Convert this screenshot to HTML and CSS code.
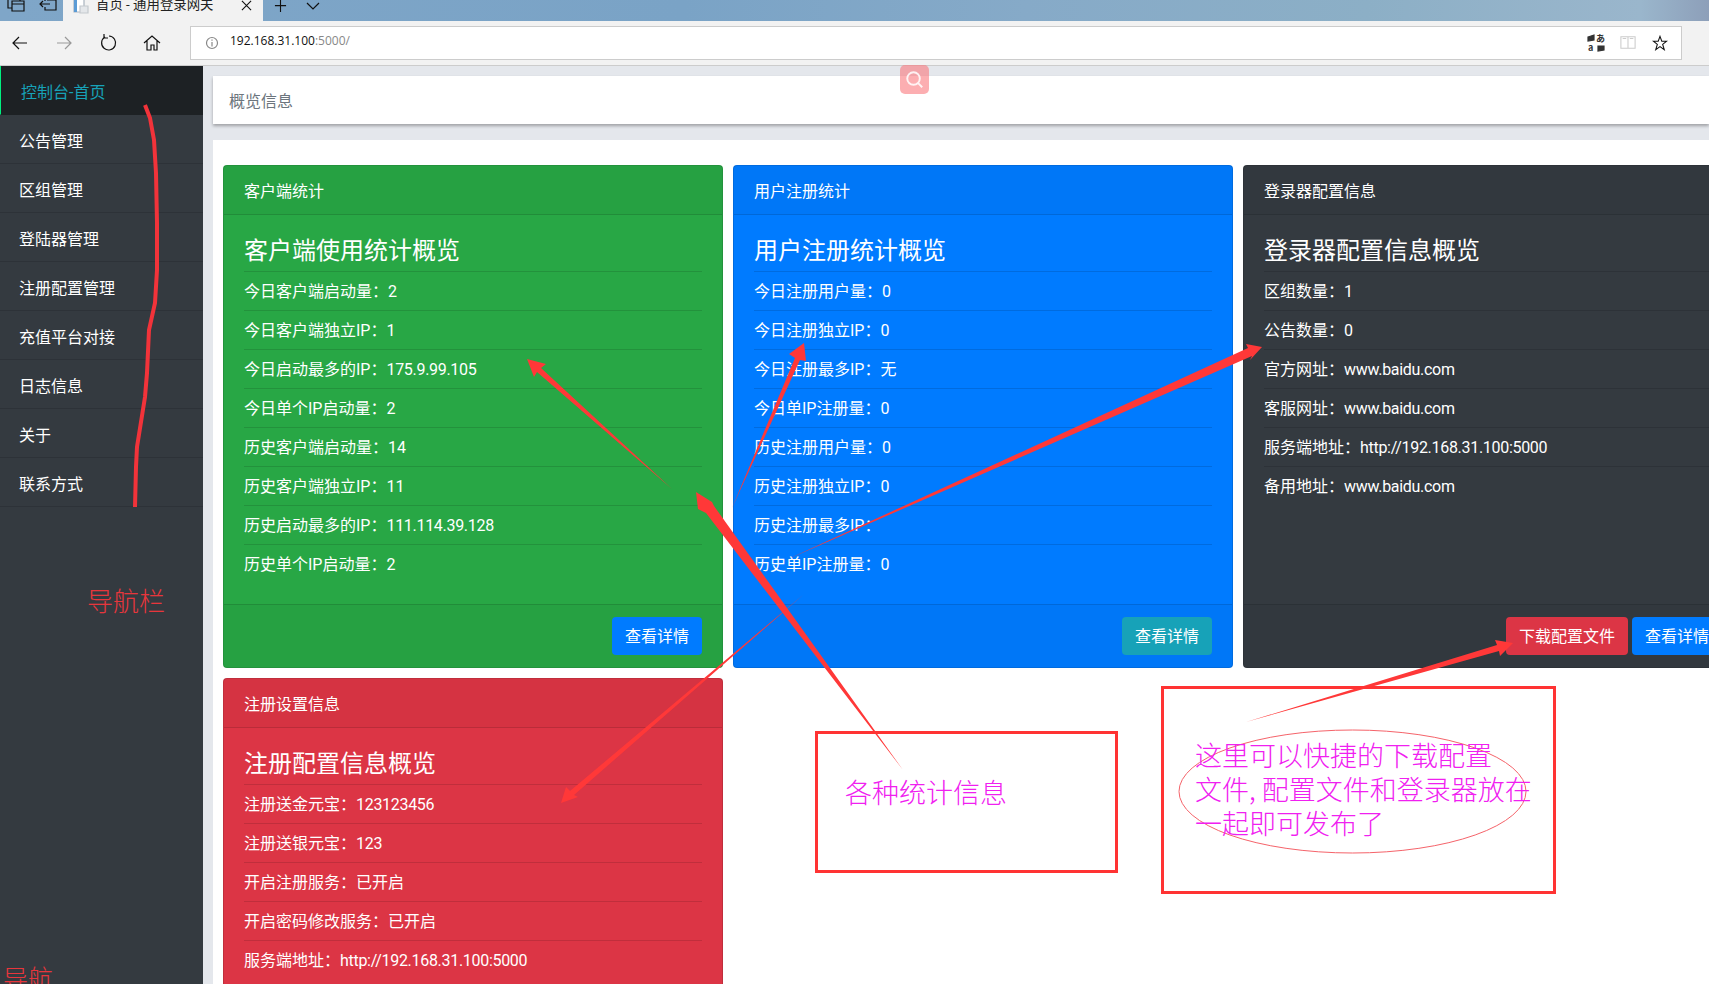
FILE: index.html
```html
<!DOCTYPE html>
<html lang="zh-CN">
<head>
    <meta charset="UTF-8">
    <title>首页 - 通用登录网关</title>
    <link rel="stylesheet" href="styles.css">
</head>
<body>
    <div class="tabstrip">
        <div class="strip-icons">
            <svg class="strip-icon" viewBox="0 0 20 16"><path d="M2 -4H14V1M2 -4V8H6M6 1H18V11H6ZM6 4H18"/></svg>
            <svg class="strip-icon" viewBox="0 0 20 16"><path d="M6 -3H17V10H6V7M6 1V-3M1 4H11M4 1L1 4L4 7M8 0H17"/></svg>
        </div>
        <div class="tab">
            <svg class="tab-doc" viewBox="0 0 16 16"><path class="doc-page" d="M1 -4H11V12H1Z"/><path class="doc-side" d="M1 -4H4V12H1Z"/><path class="doc-corner" d="M7 6H15V13H7Z"/></svg>
            <span class="tab-title">首页 - 通用登录网关</span>
            <svg class="tab-close" viewBox="0 0 12 12"><path d="M1 1L11 11M11 1L1 11"/></svg>
        </div>
        <svg class="tab-add" viewBox="0 0 14 14"><path d="M7 0V13M1 6H13"/></svg>
        <svg class="tab-more" viewBox="0 0 14 8"><path d="M1 1L7 7L13 1"/></svg>
    </div>

    <div class="toolbar">
        <span class="tool"><svg viewBox="0 0 18 18"><path d="M16 9H2M8 3L2 9L8 15"/></svg></span>
        <span class="tool tool-off"><svg viewBox="0 0 18 18"><path d="M2 9H16M10 3L16 9L10 15"/></svg></span>
        <span class="tool"><svg viewBox="0 0 18 18"><path d="M6 3A7 7 0 1 0 10 2M5 0V4H9"/></svg></span>
        <span class="tool"><svg viewBox="0 0 18 18"><path d="M1 9L9 2L17 9M4 7V16H8V11H11V16H14V7"/></svg></span>
        <div class="address">
            <svg class="addr-info" viewBox="0 0 14 14"><circle cx="7" cy="7" r="5.5"/><path d="M7 6V10.5M7 3.5V4.8"/></svg>
            <span class="addr-url">192.168.31.100<span class="addr-port">:5000/</span></span>
            <svg class="addr-translate" viewBox="0 0 18 18">
                <path d="M1 3L7 1V6L1 7Z"/>
                <path d="M11 12H17V16L11 17Z"/>
                <text x="9" y="8" class="addr-glyph">あ</text>
                <text x="1" y="17" class="addr-glyph">a</text>
            </svg>
            <svg class="addr-book" viewBox="0 0 18 18"><path d="M1 2H17V15H1ZM9 2V15M3 4H7M11 4H15"/></svg>
            <svg class="addr-star" viewBox="0 0 18 18"><path d="M9 1.5L11 7H16.5L12 10.5L13.8 16.5L9 13L4.2 16.5L6 10.5L1.5 7H7Z"/></svg>
        </div>
    </div>

    <div class="app">
        <ul class="sidebar">
            <li class="nav-item active">控制台-首页</li>
            <li class="nav-item">公告管理</li>
            <li class="nav-item">区组管理</li>
            <li class="nav-item">登陆器管理</li>
            <li class="nav-item">注册配置管理</li>
            <li class="nav-item">充值平台对接</li>
            <li class="nav-item">日志信息</li>
            <li class="nav-item">关于</li>
            <li class="nav-item">联系方式</li>
        </ul>

        <div class="main">
            <div class="page-head">概览信息</div>
            <div class="content">
                <div class="card card-green">
                    <div class="card-head">客户端统计</div>
                    <div class="card-body">
                        <h4>客户端使用统计概览</h4>
                        <ul class="stat-list">
                            <li>今日客户端启动量：2</li>
                            <li>今日客户端独立IP：1</li>
                            <li>今日启动最多的IP：<span class="val">175.9.99.105</span></li>
                            <li>今日单个IP启动量：2</li>
                            <li>历史客户端启动量：14</li>
                            <li>历史客户端独立IP：11</li>
                            <li>历史启动最多的IP：<span class="val">111.114.39.128</span></li>
                            <li>历史单个IP启动量：2</li>
                        </ul>
                    </div>
                    <div class="card-foot"><a class="btn btn-blue">查看详情</a></div>
                </div>

                <div class="card card-blue">
                    <div class="card-head">用户注册统计</div>
                    <div class="card-body">
                        <h4>用户注册统计概览</h4>
                        <ul class="stat-list">
                            <li>今日注册用户量：0</li>
                            <li>今日注册独立IP：0</li>
                            <li>今日注册最多IP：无</li>
                            <li>今日单IP注册量：0</li>
                            <li>历史注册用户量：0</li>
                            <li>历史注册独立IP：0</li>
                            <li>历史注册最多IP：</li>
                            <li>历史单IP注册量：0</li>
                        </ul>
                    </div>
                    <div class="card-foot"><a class="btn btn-teal">查看详情</a></div>
                </div>

                <div class="card card-dark">
                    <div class="card-head">登录器配置信息</div>
                    <div class="card-body">
                        <h4>登录器配置信息概览</h4>
                        <ul class="stat-list">
                            <li>区组数量：1</li>
                            <li>公告数量：0</li>
                            <li>官方网址：<span class="val">www.baidu.com</span></li>
                            <li>客服网址：<span class="val">www.baidu.com</span></li>
                            <li>服务端地址：<span class="val">http://192.168.31.100:5000</span></li>
                            <li>备用地址：<span class="val">www.baidu.com</span></li>
                        </ul>
                    </div>
                    <div class="card-foot"><a class="btn btn-red">下载配置文件</a><a class="btn btn-blue">查看详情</a></div>
                </div>

                <div class="card card-red">
                    <div class="card-head">注册设置信息</div>
                    <div class="card-body">
                        <h4>注册配置信息概览</h4>
                        <ul class="stat-list">
                            <li>注册送金元宝：<span class="val">123123456</span></li>
                            <li>注册送银元宝：<span class="val">123</span></li>
                            <li>开启注册服务：已开启</li>
                            <li>开启密码修改服务：已开启</li>
                            <li>服务端地址：<span class="val">http://192.168.31.100:5000</span></li>
                        </ul>
                    </div>
                </div>
            </div>
        </div>
    </div>

    <a class="search-btn">
        <svg viewBox="0 0 30 30"><circle cx="14" cy="14" r="6.5"/><path d="M19 19L23 23"/></svg>
    </a>

    <!-- annotations drawn on top of the screenshot -->
    <svg class="marks" viewBox="0 0 1709 984">
        <polyline class="mark-line" points="145,105 150,118 154,140 156,173 157,223 157,270 155,303 149,330 147,373 145,397 137,447 136,467 135,507"/>
        <polygon class="mark-arrow" points="672,489 541,368 546,364 527,359 534,377 537,372"/>
        <polygon class="mark-arrow" points="903,770 714,506 712,502 696,492 698,509 706,513"/>
        <polygon class="mark-arrow" points="732,508 795,358 789,354 804,343 806,361 800,360"/>
        <polygon class="mark-arrow" points="786,560 1248,348 1246,344 1262,347 1250,360 1252,356"/>
        <polygon class="mark-arrow" points="803,595 574,795 578,797 561,803 566,787 570,791"/>
        <polygon class="mark-arrow" points="1246,722 1497,645 1495,640 1513,643 1500,656 1499,651"/>
        <rect class="mark-box" x="816.5" y="732.5" width="300" height="139"/>
        <rect class="mark-box" x="1162.5" y="687.5" width="392" height="205"/>
        <ellipse class="mark-oval" cx="1352.5" cy="791.5" rx="173.5" ry="61.5"/>
    </svg>

    <div class="note note-nav">导航栏</div>
    <div class="note note-nav2">导航</div>
    <div class="note note-stats">各种统计信息</div>
    <div class="note note-download">这里可以快捷的下载配置<br>文件, 配置文件和登录器放在<br>一起即可发布了</div>
</body>
</html>
```

FILE: styles.css
```css
* {
    box-sizing: border-box;
}
html, body {
    margin: 0;
    padding: 0;
    height: 984px;
    overflow: hidden;
}
body {
    position: relative;
    font-family: Roboto, "Noto Sans CJK SC", sans-serif;
    font-size: 16px;
    line-height: 24px;
    color: #fff;
    background: #e4e7ec;
}
ul {
    list-style: none;
    margin: 0;
    padding: 0;
}

/* browser frame */
.tabstrip {
    display: flex;
    height: 21px;
    overflow: hidden;
    background: linear-gradient(90deg, #7fa6c8 0%, #7aa3c6 40%, #86aac8 60%, #8cafc6 80%, #9ab6cc 96%, #8d9fb9 100%);
}
.tabstrip svg, .toolbar svg {
    fill: none;
    stroke: #111;
    stroke-width: 1.2;
}
.strip-icons {
    display: flex;
    width: 63px;
    gap: 13px;
    padding-left: 6px;
}
.strip-icon {
    width: 20px;
    height: 16px;
    flex: none;
    overflow: visible;
}
.tab {
    display: flex;
    align-items: flex-start;
    width: 200px;
    background: #f2f2f2;
    color: #222;
    font-size: 13.4px;
    padding-left: 10px;
}
.tab-doc {
    width: 16px;
    height: 16px;
    flex: none;
    overflow: visible;
}
.tabstrip .tab-doc .doc-page {
    fill: #fff;
    stroke: #a9b4bf;
}
.tabstrip .tab-doc .doc-side {
    fill: #5b9bd5;
    stroke: none;
}
.tabstrip .tab-doc .doc-corner {
    fill: #e4e7ea;
    stroke: #c4c9ce;
}
.tab-title {
    flex: 1;
    margin: -7px 0 0 7px;
    white-space: nowrap;
}
.tab-close {
    width: 11px;
    height: 11px;
    flex: none;
    margin-right: 11px;
}
.tab-add {
    width: 13px;
    height: 13px;
    margin-left: 11px;
    flex: none;
}
.tab-more {
    width: 14px;
    height: 8px;
    margin: 2px 0 0 19px;
    flex: none;
}
.toolbar {
    display: flex;
    align-items: flex-start;
    height: 45px;
    padding: 5px 27px 0 0;
    margin-left: -2px;
    background: #f2f2f2;
    border-bottom: 1px solid #ccc;
}
.tool {
    width: 44px;
    height: 34px;
    flex: none;
    display: flex;
    align-items: center;
    justify-content: center;
}
.tool svg {
    width: 18px;
    height: 18px;
    overflow: visible;
}
.tool-off svg {
    stroke: #999;
}
.address {
    flex: 1;
    height: 34px;
    margin-left: 16px;
    display: flex;
    align-items: center;
    background: #fff;
    border: 1px solid #ccc;
    padding: 0 13px 0 14px;
    color: #111;
    font-size: 12px;
}
.address svg {
    width: 16px;
    height: 16px;
    flex: none;
}
.toolbar .addr-info {
    width: 14px;
    height: 14px;
    stroke: #888;
}
.addr-url {
    flex: 1;
    margin: -5px 0 0 11px;
    font-family: "Open Sans", sans-serif;
}
.addr-port {
    color: #888;
}
.toolbar .addr-translate {
    width: 18px;
    height: 18px;
    margin-right: 15px;
    fill: #333;
    stroke: #333;
    overflow: visible;
}
.toolbar .addr-glyph {
    font-family: "Noto Sans CJK SC", sans-serif;
    font-size: 9px;
    font-weight: 700;
    stroke: none;
}
.toolbar .addr-book {
    margin-right: 16px;
    stroke: #ccc;
}

/* app */
.app {
    display: flex;
    height: 918px;
}
.sidebar {
    width: 203px;
    flex: none;
    background: #343a40;
}
.nav-item {
    height: 49px;
    padding: 15px 19px 9px;
    border-bottom: 1px solid #2d3238;
}
.nav-item.active {
    background: #1d2124;
    color: #17a2b8;
    border-left: 1px solid #00f080;
    padding-left: 20px;
    border-bottom-color: #1d2124;
}
.main {
    flex: 1;
    min-width: 0;
    padding: 10px 0 0 10px;
    overflow: hidden;
}
.page-head {
    height: 48px;
    padding: 14px 16px 10px;
    background: #fff;
    color: #6c757d;
    box-shadow: 0 2px 3px rgba(0,0,0,0.3);
    margin-bottom: 16px;
}
.content {
    display: grid;
    grid-template-columns: repeat(3, 500px);
    grid-auto-rows: min-content;
    gap: 10px;
    width: 1600px;
    height: 900px;
    padding: 25px 10px 0;
    background: #fff;
}
.card {
    display: flex;
    flex-direction: column;
    border: 1px solid rgba(0,0,0,0.125);
    border-radius: 4px;
}
.card-green { background: #28a745; }
.card-blue { background: #007bff; }
.card-dark { background: #343a40; }
.card-red { background: #dc3545; }
.card-head {
    padding: 14px 20px 10px;
    background: rgba(0,0,0,0.03);
    border-bottom: 1px solid rgba(0,0,0,0.125);
}
.card-body {
    flex: 1;
    padding: 22px 20px 21px;
}
.card-body h4 {
    margin: 0 0 5px;
    font-size: 24px;
    font-weight: 400;
    line-height: 29px;
}
.stat-list li {
    height: 39px;
    padding: 8px 0 6px;
    border-top: 1px solid rgba(0,0,0,0.125);
}
.val {
    letter-spacing: -0.3px;
}
.card-foot {
    display: flex;
    justify-content: flex-end;
    gap: 4px;
    padding: 12px 20px;
    background: rgba(0,0,0,0.03);
    border-top: 1px solid rgba(0,0,0,0.125);
}
.btn {
    padding: 8px 13px 6px;
    border-radius: 4px;
    color: #fff;
}
.btn-blue { background: #007bff; }
.btn-teal { background: #17a2b8; }
.btn-red { background: #dc3545; }

/* things lying over the page */
.search-btn {
    position: absolute;
    left: 900px;
    top: 65px;
    width: 29px;
    height: 29px;
    border-radius: 5px;
    background: rgba(250,120,125,0.6);
}
.search-btn svg {
    display: block;
    width: 29px;
    height: 29px;
    fill: none;
    stroke: rgba(255,255,255,0.85);
    stroke-width: 2;
}
.marks {
    position: absolute;
    left: 0;
    top: 0;
    width: 1709px;
    height: 984px;
    pointer-events: none;
}
.mark-arrow {
    fill: #ff3838;
}
.mark-line {
    fill: none;
    stroke: #f2333a;
    stroke-width: 4;
}
.mark-box {
    fill: none;
    stroke: #ff3333;
    stroke-width: 3;
}
.mark-oval {
    fill: none;
    stroke: #f5636a;
    stroke-width: 1;
}
.note {
    position: absolute;
    font-weight: 300;
    white-space: nowrap;
    font-family: "Noto Sans CJK SC", sans-serif;
}
.note-nav {
    left: 87px;
    top: 581px;
    font-size: 26px;
    line-height: 38px;
    color: #e8363c;
}
.note-nav2 {
    left: 3px;
    top: 958px;
    font-size: 25px;
    line-height: 38px;
    color: #e8363c;
}
.note-stats {
    left: 845px;
    top: 773px;
    font-size: 27px;
    line-height: 38px;
    color: #f020f0;
}
.note-download {
    left: 1195px;
    top: 738px;
    font-size: 27px;
    line-height: 34px;
    color: #f020f0;
}
```
